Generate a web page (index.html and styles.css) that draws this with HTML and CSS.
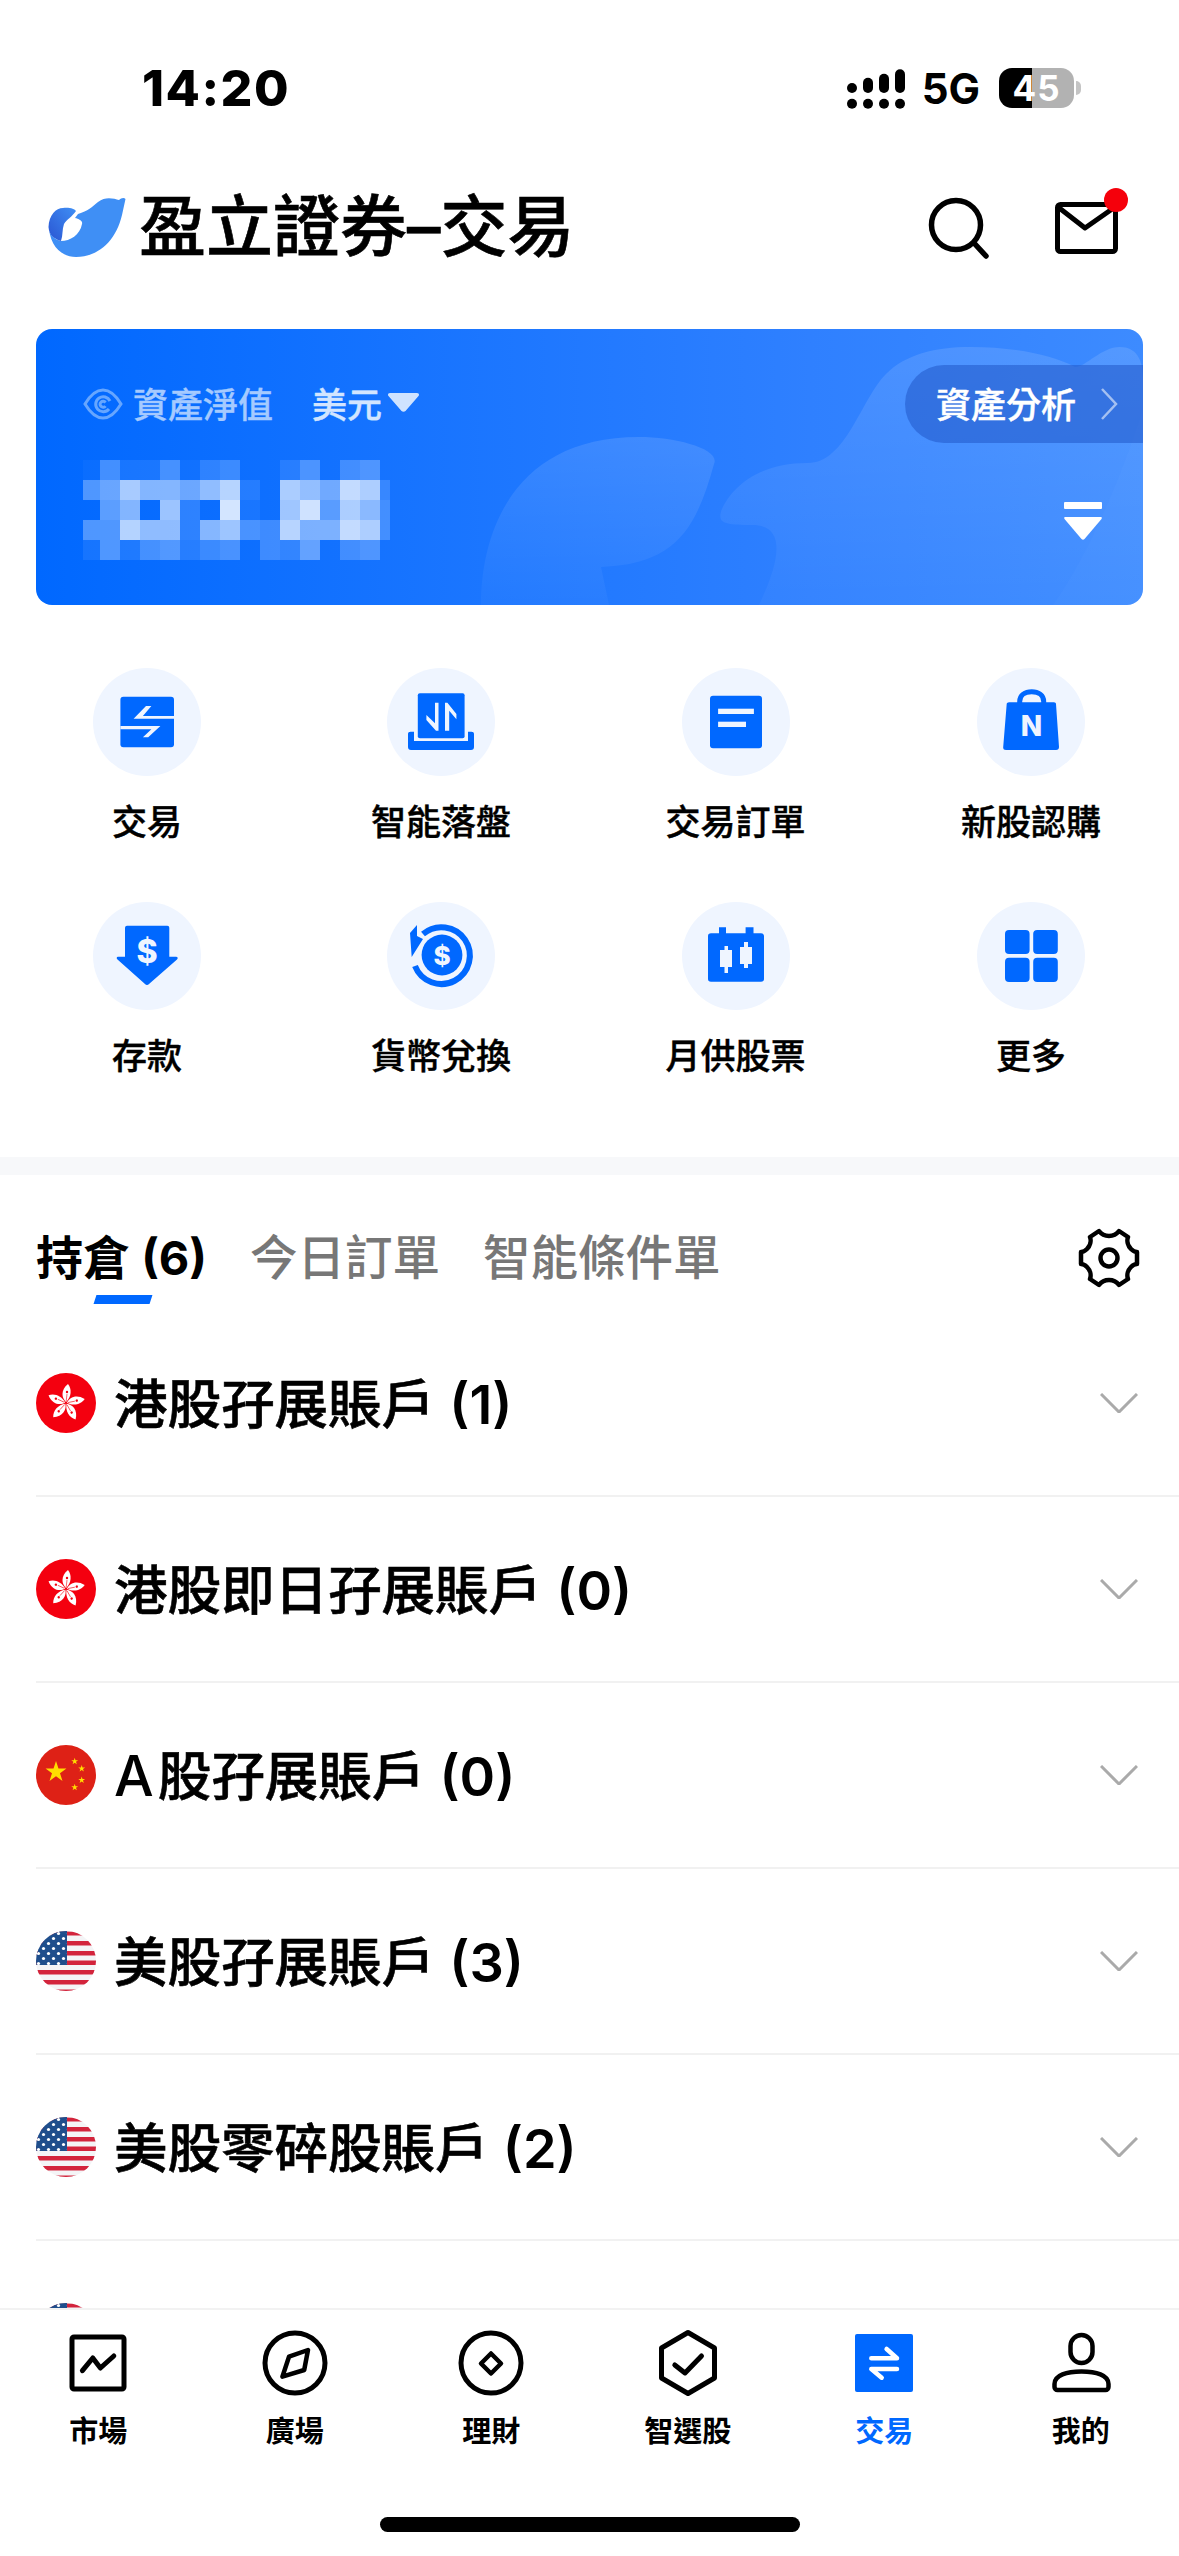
FILE: index.html
```html
<!DOCTYPE html>
<html lang="zh-Hant">
<head>
<meta charset="utf-8">
<meta name="viewport" content="width=device-width, initial-scale=1">
<title>盈立證券-交易</title>
<link rel="stylesheet" href="styles.css">
</head>

<body>

<!-- Shared flags -->
<svg class="svg-defs" aria-hidden="true">
    <defs>
        <polygon id="star" points="0,-1 .225,-.309 .951,-.309 .363,.118 .588,.809 0,.382 -.588,.809 -.363,.118 -.951,-.309 -.225,-.309"/>
        <g id="petal">
            <path d="M30 29C25.500 25 24.500 17 32 11C36 16 35.500 24 30 29Z" fill="#fff"/>
            <circle cx="31" cy="19" r="1.200" fill="#f4000f"/>
            <path d="M30.200 28L31 21" stroke="#f4000f" stroke-width=".6"/>
        </g>
        <symbol id="flag-hk" viewBox="0 0 60 60">
            <circle cx="30" cy="30" r="30" fill="#f4000f"/>
            <use href="#petal"/>
            <use href="#petal" transform="rotate(72 30 30)"/>
            <use href="#petal" transform="rotate(144 30 30)"/>
            <use href="#petal" transform="rotate(216 30 30)"/>
            <use href="#petal" transform="rotate(288 30 30)"/>
        </symbol>
        <symbol id="flag-cn" viewBox="0 0 60 60">
            <circle cx="30" cy="30" r="30" fill="#de2116"/>
            <g fill="#ffde00">
                <use href="#star" transform="translate(20 27) scale(11)"/>
                <use href="#star" transform="translate(38.7 16.3) scale(3.6)"/>
                <use href="#star" transform="translate(45.7 23.7) scale(3.6)"/>
                <use href="#star" transform="translate(45.7 35) scale(3.6)"/>
                <use href="#star" transform="translate(38.7 42.3) scale(3.6)"/>
            </g>
        </symbol>
        <pattern id="us-stars" width="10" height="10" patternUnits="userSpaceOnUse">
            <circle cx="2.5" cy="2.5" r="1.6" fill="#fff"/>
            <circle cx="7.5" cy="7.5" r="1.6" fill="#fff"/>
        </pattern>
        <clipPath id="us-clip"><circle cx="30" cy="30" r="30"/></clipPath>
        <symbol id="flag-us" viewBox="0 0 60 60">
            <g clip-path="url(#us-clip)">
                <rect width="60" height="60" fill="#f4f4f6"/>
                <path d="M0 .5h60v4H0zM0 10h60v4.500H0zM0 20h60v4.500H0zM0 29.500h60v4.500H0zM0 39h60v4.500H0zM0 49h60v4.500H0zM0 58.500h60v2H0z" fill="#d3243c"/>
                <rect width="31" height="34" fill="#1f4e8c"/>
                <rect width="31" height="34" fill="url(#us-stars)"/>
            </g>
        </symbol>
        <linearGradient id="art-fade" x1="0" y1="0" x2="0" y2="1">
            <stop offset="0" stop-color="#fff" stop-opacity=".12"/>
            <stop offset="1" stop-color="#fff" stop-opacity=".03"/>
        </linearGradient>
    </defs>
</svg>

<main class="page">

    <!-- Status bar -->
    <div class="status-bar">
        <span class="status-time">14:20</span>
        <div class="status-right">
            <svg class="signal" viewBox="0 0 59 43" fill="#000">
                <rect x="0" y="16" width="10" height="10" rx="5"/>
                <rect x="16" y="10.700" width="10" height="15.300" rx="5"/>
                <rect x="32" y="6.700" width="10" height="19.300" rx="5"/>
                <rect x="48" y="2.300" width="10" height="23.700" rx="5"/>
                <circle cx="5" cy="36.700" r="5"/>
                <circle cx="21" cy="36.700" r="5"/>
                <circle cx="37" cy="36.700" r="5"/>
                <circle cx="53" cy="36.700" r="5"/>
            </svg>
            <span class="status-net">5G</span>
            <span class="battery">45</span>
        </div>
    </div>

    <!-- Title -->
    <header class="top-bar">
        <svg class="logo" viewBox="0 0 78 60">
            <defs>
                <linearGradient id="logo-dark" x1="0" y1="1" x2="1" y2="0">
                    <stop offset="0" stop-color="#2a55d2"/>
                    <stop offset="1" stop-color="#3f8ff5"/>
                </linearGradient>
            </defs>
            <path d="M1 32C3 50 14 60 28 60C50 60 68 44 74 18L77.500 2C76 0 73 1 71 3C66 2 58-1 50 5C44 10 40 14 30 17L27 21C31 22 35 24 34 27C32 38 22 44 13 44C6 42 2 38 1 32Z" fill="#3f8ff5"/>
            <path d="M.500 30C1 18 8 11 15 11C21 10 27 12 28 14C24 20 19 22 16 27C14 33 15 38 13 44C6 42 1 38 .500 30Z" fill="url(#logo-dark)"/>
        </svg>
        <h1 class="app-title">盈立證券–交易</h1>
        <svg class="search-icon" viewBox="0 0 70 66" fill="none" stroke="#000" stroke-width="5.500" stroke-linecap="round">
            <circle cx="32" cy="31" r="24.500"/>
            <path d="M50 49L62 62"/>
        </svg>
        <svg class="mail-icon" viewBox="0 0 78 82" fill="none" stroke="#000" stroke-width="5" stroke-linejoin="round">
            <rect x="5.500" y="18.500" width="58" height="47" rx="3"/>
            <path d="M6 21L33 42L63 21"/>
            <circle cx="64" cy="14" r="12" fill="#f5000b" stroke="none"/>
        </svg>
    </header>

    <!-- Asset card -->
    <section class="asset-card">
        <svg class="card-art" viewBox="0 0 1107 276" preserveAspectRatio="none">
            <path d="M445 276C445 200 480 108 603 108C640 108 685 120 678 135C660 200 640 235 565 238L573 276Z" fill="url(#art-fade)"/>
            <path d="M723 276C745 230 750 196 716 196C690 196 680 195 686 180C695 160 720 134 772 134C810 134 825 70 850 45C870 25 900 18 934 18C975 18 1015 25 1039 38C1050 38 1065 18 1084 18C1100 18 1107 30 1107 50V276Z" fill="url(#art-fade)"/>
            <path d="M1107 80L1107 276H1017C1050 230 1085 150 1107 80Z" fill="#fff" fill-opacity=".02"/>
        </svg>
        <div class="asset-head">
            <svg class="eye-icon" viewBox="0 0 40 32" fill="none" stroke="#66a6ff" stroke-width="3">
                <path d="M2 16C8 6 14 2 20 2C26 2 32 6 38 16C32 26 26 30 20 30C14 30 8 26 2 16Z"/>
                <path d="M27 13A7.500 7.500 0 1 0 26 21M22.500 14.500A3 3 0 1 0 22.500 18"/>
            </svg>
            <span class="asset-label">資產淨值</span>
            <span class="asset-currency">美元</span>
            <svg class="currency-caret" viewBox="0 0 31 19"><path d="M2 0H29C31 0 31.500 2 30.500 3L17.500 18C16.500 19 14.500 19 13.500 18L.500 3C-.500 2 0 0 2 0Z" fill="#cfe3ff"/></svg>
            <div class="analysis-pill">
                <span class="pill-text">資產分析</span>
                <svg class="pill-arrow" viewBox="0 0 18 32" fill="none" stroke="#fff" stroke-opacity=".55" stroke-width="2.500"><path d="M2 1L16 16L2 31"/></svg>
            </div>
        </div>
        <div class="asset-body">
            <!-- Masked balance -->
            <svg class="masked-value" viewBox="0 0 307 100" fill="#fff">
                <rect width="17" height="20" fill-opacity=".03"/><rect x="17" width="20" height="20" fill-opacity=".25"/><rect x="37" width="20" height="20" fill-opacity=".08"/><rect x="57" width="20" height="20" fill-opacity=".08"/><rect x="77" width="20" height="20" fill-opacity=".25"/><rect x="97" width="20" height="20" fill-opacity=".03"/><rect x="117" width="20" height="20" fill-opacity=".15"/><rect x="137" width="20" height="20" fill-opacity=".2"/><rect x="197" width="20" height="20" fill-opacity=".1"/><rect x="217" width="20" height="20" fill-opacity=".25"/><rect x="257" width="20" height="20" fill-opacity=".2"/><rect x="277" width="20" height="20" fill-opacity=".25"/>
                <rect y="20" width="17" height="20" fill-opacity=".3"/><rect x="17" y="20" width="20" height="20" fill-opacity=".4"/><rect x="37" y="20" width="20" height="20" fill-opacity=".65"/><rect x="57" y="20" width="20" height="20" fill-opacity=".5"/><rect x="77" y="20" width="20" height="20" fill-opacity=".5"/><rect x="97" y="20" width="20" height="20" fill-opacity=".4"/><rect x="117" y="20" width="20" height="20" fill-opacity=".55"/><rect x="137" y="20" width="20" height="20" fill-opacity=".7"/><rect x="157" y="20" width="20" height="20" fill-opacity=".1"/><rect x="197" y="20" width="20" height="20" fill-opacity=".65"/><rect x="217" y="20" width="20" height="20" fill-opacity=".55"/><rect x="237" y="20" width="20" height="20" fill-opacity=".4"/><rect x="257" y="20" width="20" height="20" fill-opacity=".75"/><rect x="277" y="20" width="20" height="20" fill-opacity=".65"/><rect x="297" y="20" width="10" height="20" fill-opacity=".15"/>
                <rect x="17" y="40" width="20" height="20" fill-opacity=".35"/><rect x="37" y="40" width="20" height="20" fill-opacity=".5"/><rect x="77" y="40" width="20" height="20" fill-opacity=".6"/><rect x="97" y="40" width="20" height="20" fill-opacity=".15"/><rect x="137" y="40" width="20" height="20" fill-opacity=".82"/><rect x="157" y="40" width="20" height="20" fill-opacity=".05"/><rect x="197" y="40" width="20" height="20" fill-opacity=".6"/><rect x="217" y="40" width="20" height="20" fill-opacity=".8"/><rect x="237" y="40" width="20" height="20" fill-opacity=".3"/><rect x="257" y="40" width="20" height="20" fill-opacity=".65"/><rect x="277" y="40" width="20" height="20" fill-opacity=".5"/><rect x="297" y="40" width="10" height="20" fill-opacity=".2"/>
                <rect y="60" width="17" height="20" fill-opacity=".3"/><rect x="17" y="60" width="20" height="20" fill-opacity=".3"/><rect x="37" y="60" width="20" height="20" fill-opacity=".7"/><rect x="57" y="60" width="20" height="20" fill-opacity=".55"/><rect x="77" y="60" width="20" height="20" fill-opacity=".55"/><rect x="97" y="60" width="20" height="20" fill-opacity=".15"/><rect x="117" y="60" width="20" height="20" fill-opacity=".5"/><rect x="137" y="60" width="20" height="20" fill-opacity=".6"/><rect x="157" y="60" width="20" height="20" fill-opacity=".25"/><rect x="177" y="60" width="20" height="20" fill-opacity=".2"/><rect x="197" y="60" width="20" height="20" fill-opacity=".7"/><rect x="217" y="60" width="20" height="20" fill-opacity=".45"/><rect x="237" y="60" width="20" height="20" fill-opacity=".45"/><rect x="257" y="60" width="20" height="20" fill-opacity=".75"/><rect x="277" y="60" width="20" height="20" fill-opacity=".65"/><rect x="297" y="60" width="10" height="20" fill-opacity=".2"/>
                <rect y="80" width="17" height="20" fill-opacity=".08"/><rect x="17" y="80" width="20" height="20" fill-opacity=".3"/><rect x="37" y="80" width="20" height="20" fill-opacity=".1"/><rect x="57" y="80" width="20" height="20" fill-opacity=".25"/><rect x="77" y="80" width="20" height="20" fill-opacity=".3"/><rect x="97" y="80" width="20" height="20" fill-opacity=".12"/><rect x="117" y="80" width="20" height="20" fill-opacity=".2"/><rect x="137" y="80" width="20" height="20" fill-opacity=".25"/><rect x="177" y="80" width="20" height="20" fill-opacity=".2"/><rect x="197" y="80" width="20" height="20" fill-opacity=".15"/><rect x="217" y="80" width="20" height="20" fill-opacity=".35"/><rect x="257" y="80" width="20" height="20" fill-opacity=".2"/><rect x="277" y="80" width="20" height="20" fill-opacity=".25"/>
            </svg>
            <svg class="expand-icon" viewBox="0 0 38 38" fill="#fff">
                <rect x="0" y="0" width="38" height="7" rx="1"/>
                <path d="M1 15H37C38 15 38 16 37.500 17L20.500 37C19.500 38 18.500 38 17.500 37L.500 17C0 16 0 15 1 15Z"/>
            </svg>
        </div>
    </section>

    <!-- Quick actions -->
    <nav class="quick-grid">
        <a class="quick-item">
            <span class="quick-circle">
                <svg viewBox="0 0 108 108">
                    <rect x="27.400" y="28.700" width="53.600" height="50.600" rx="3" fill="#0068ff"/>
                    <path d="M40.600 50.700L53 38H58.400L49.900 48H81V50.700ZM27.400 58H67.400L55.200 69.300H49.900L58.400 61.300H27.400Z" fill="#eff5ff"/>
                </svg>
            </span>
            <span class="quick-label">交易</span>
        </a>
        <a class="quick-item">
            <span class="quick-circle">
                <svg viewBox="0 0 108 108">
                    <path d="M21 66C21 64.500 22 63.700 23.500 63.700H27V73H81V63.700H84.500C86 63.700 87 64.500 87 66V79C87 81 86 82 84 82H24C22 82 21 81 21 79Z" fill="#0068ff"/>
                    <rect x="30.800" y="25.300" width="46.800" height="45" rx="2" fill="#0068ff"/>
                    <path d="M51.500 34.700V62.700H49L39.400 52V47L48 55.300V34.700ZM58 62.700V34.700H60.400L69.400 46V51.300L62.200 42.700V62.700Z" fill="#eff5ff"/>
                </svg>
            </span>
            <span class="quick-label">智能落盤</span>
        </a>
        <a class="quick-item">
            <span class="quick-circle">
                <svg viewBox="0 0 108 108">
                    <rect x="28" y="27.700" width="52" height="52.600" rx="3" fill="#0068ff"/>
                    <rect x="36.100" y="40.700" width="35.800" height="5.300" fill="#eff5ff"/>
                    <rect x="36.100" y="53.700" width="27.900" height="5.300" fill="#eff5ff"/>
                </svg>
            </span>
            <span class="quick-label">交易訂單</span>
        </a>
        <a class="quick-item">
            <span class="quick-circle">
                <svg viewBox="0 0 108 108">
                    <path d="M42.700 36V33.500C42.700 27 48 23.800 54.700 23.800C61.400 23.800 66.700 27 66.700 33.500V36" fill="none" stroke="#0068ff" stroke-width="5"/>
                    <path d="M32 34.300H77C78 34.300 79 35 79 36L82 79C82 81 81 82 79 82H29C27 82 26 81 26.200 79L29.700 36C29.700 35 31 34.300 32 34.300Z" fill="#0068ff"/>
                    <text class="icon-letter" x="54.500" y="68" text-anchor="middle" font-size="28">N</text>
                </svg>
            </span>
            <span class="quick-label">新股認購</span>
        </a>
        <a class="quick-item">
            <span class="quick-circle">
                <svg viewBox="0 0 108 108">
                    <path d="M34 23.700H74.300C75.500 23.700 76.300 24.500 76.300 26V54.700H83C85 54.700 85 56.500 84 57.500L56 82C55 83.300 53 83.300 52 82L24.500 57.500C23.300 56.500 23.500 54.700 25 54.700H32V26C32 24.500 33 23.700 34 23.700Z" fill="#0068ff"/>
                    <text class="icon-letter" x="54" y="61" text-anchor="middle" font-size="32">$</text>
                </svg>
            </span>
            <span class="quick-label">存款</span>
        </a>
        <a class="quick-item">
            <span class="quick-circle">
                <svg viewBox="0 0 108 108">
                    <path d="M28 64A28.400 28.400 0 1 0 36 32" fill="none" stroke="#0068ff" stroke-width="6"/>
                    <path d="M30 23L23 31L24.700 55L36 37L30 34Z" fill="#0068ff"/>
                    <circle cx="55" cy="53" r="20.400" fill="#0068ff"/>
                    <text class="icon-letter" x="55" y="62.500" text-anchor="middle" font-size="26">$</text>
                </svg>
            </span>
            <span class="quick-label">貨幣兌換</span>
        </a>
        <a class="quick-item">
            <span class="quick-circle">
                <svg viewBox="0 0 108 108">
                    <path d="M37 25.300H44V31.300H63.600V25.300H71.500V31.300H79C81 31.300 82 32.300 82 34V77C82 79 81 79.700 79 79.700H29C27 79.700 26 79 26 77V34C26 32.300 27 31.300 29 31.300H37Z" fill="#0068ff"/>
                    <path d="M42.500 44H46V48H50V65H46V71H42.500V65H38V48H42.500ZM62 40H66V45H70V62H66V66H62V62H58V45H62Z" fill="#eff5ff"/>
                </svg>
            </span>
            <span class="quick-label">月供股票</span>
        </a>
        <a class="quick-item">
            <span class="quick-circle">
                <svg viewBox="0 0 108 108" fill="#0068ff">
                    <rect x="28" y="28" width="24.600" height="24" rx="4"/>
                    <rect x="56.200" y="28" width="24.600" height="24" rx="4"/>
                    <rect x="28" y="55.700" width="24.600" height="24.300" rx="4"/>
                    <rect x="56.200" y="55.700" width="24.600" height="24.300" rx="4"/>
                </svg>
            </span>
            <span class="quick-label">更多</span>
        </a>
    </nav>

    <div class="band"></div>

    <!-- Position tabs -->
    <div class="tabs">
        <span class="tab tab-active">持倉 (6)</span>
        <span class="tab">今日訂單</span>
        <span class="tab">智能條件單</span>
        <svg class="gear-icon" viewBox="0 0 62 60" fill="none" stroke="#000" stroke-width="4.500" stroke-linejoin="round">
            <path d="M21 3C24 7 27 8 31 8C35 8 38 7 41 3L50 9C48.500 13 50 18 53 21C55 23 57 24 59 24V36C57 36 55 37 53 39C50 42 48.500 47 50 51L41 57C38 53 35 52 31 52C27 52 24 53 21 57L12 51C13.500 47 12 42 9 39C7 37 5 36 3 36V24C5 24 7 23 9 21C12 18 13.500 13 12 9Z"/>
            <circle cx="31" cy="30" r="8.500"/>
        </svg>
    </div>

    <!-- Accounts -->
    <ul class="account-list">
        <li class="account-row">
            <svg class="flag"><use href="#flag-hk"/></svg>
            <span class="account-name">港股孖展賬戶 <span class="count">(1)</span></span>
            <svg class="chevron" viewBox="0 0 38 20" fill="none" stroke="#aaa" stroke-width="3"><path d="M1 1L19 19L37 1"/></svg>
        </li>
        <li class="account-row">
            <svg class="flag"><use href="#flag-hk"/></svg>
            <span class="account-name">港股即日孖展賬戶 <span class="count">(0)</span></span>
            <svg class="chevron" viewBox="0 0 38 20" fill="none" stroke="#aaa" stroke-width="3"><path d="M1 1L19 19L37 1"/></svg>
        </li>
        <li class="account-row">
            <svg class="flag"><use href="#flag-cn"/></svg>
            <span class="account-name"><span class="latin">A</span>股孖展賬戶 <span class="count">(0)</span></span>
            <svg class="chevron" viewBox="0 0 38 20" fill="none" stroke="#aaa" stroke-width="3"><path d="M1 1L19 19L37 1"/></svg>
        </li>
        <li class="account-row">
            <svg class="flag"><use href="#flag-us"/></svg>
            <span class="account-name">美股孖展賬戶 <span class="count">(3)</span></span>
            <svg class="chevron" viewBox="0 0 38 20" fill="none" stroke="#aaa" stroke-width="3"><path d="M1 1L19 19L37 1"/></svg>
        </li>
        <li class="account-row">
            <svg class="flag"><use href="#flag-us"/></svg>
            <span class="account-name">美股零碎股賬戶 <span class="count">(2)</span></span>
            <svg class="chevron" viewBox="0 0 38 20" fill="none" stroke="#aaa" stroke-width="3"><path d="M1 1L19 19L37 1"/></svg>
        </li>
        <li class="account-row">
            <svg class="flag"><use href="#flag-us"/></svg>
        </li>
    </ul>

</main>

<!-- Bottom navigation -->
<footer class="tab-bar">
    <div class="tab-items">
        <a class="tab-item">
            <svg viewBox="0 0 68 68" fill="none" stroke="#000" stroke-width="5" stroke-linecap="round" stroke-linejoin="round">
                <rect x="8" y="8" width="52" height="52" rx="2"/>
                <path d="M18.400 41.700L28.800 29L36.400 39L49.800 27"/>
            </svg>
            <span>市場</span>
        </a>
        <a class="tab-item">
            <svg viewBox="0 0 68 68" fill="none" stroke="#000" stroke-width="5" stroke-linejoin="round">
                <circle cx="34" cy="34" r="30"/>
                <path d="M47 21L43.200 41L21.400 47.700L28 27.700Z" stroke-width="4.500"/>
            </svg>
            <span>廣場</span>
        </a>
        <a class="tab-item">
            <svg viewBox="0 0 68 68" fill="none" stroke="#000" stroke-width="5" stroke-linejoin="round">
                <circle cx="34" cy="34" r="30"/>
                <path d="M34 24.500L44 34.500L34 44.500L24 34.500Z" stroke-width="4.500"/>
            </svg>
            <span>理財</span>
        </a>
        <a class="tab-item">
            <svg viewBox="0 0 68 68" fill="none" stroke="#000" stroke-width="5" stroke-linecap="round" stroke-linejoin="round">
                <path d="M34 3.500L60.500 19V49L34 64.500L7.500 49V19Z"/>
                <path d="M20.800 36L31 44L47.500 27"/>
            </svg>
            <span>智選股</span>
        </a>
        <a class="tab-item tab-item-active">
            <svg viewBox="0 0 68 68" fill="none" stroke="#fff" stroke-width="4.500" stroke-linecap="round" stroke-linejoin="round">
                <rect x="5" y="5" width="58" height="58" rx="2" fill="#0068ff" stroke="none"/>
                <path d="M21.300 29.200H47L36.600 20M47 40H21.300L31.700 48.700"/>
            </svg>
            <span>交易</span>
        </a>
        <a class="tab-item">
            <svg viewBox="0 0 68 68" fill="none" stroke="#000" stroke-width="4.500" stroke-linejoin="round">
                <rect x="23.500" y="6" width="22" height="28" rx="11"/>
                <path d="M7.500 55C7.500 46 20 42.500 34.500 42.500C49 42.500 61.500 46 61.500 55V58A3 3 0 0 1 58.500 61H10.500A3 3 0 0 1 7.500 58Z"/>
            </svg>
            <span>我的</span>
        </a>
    </div>
    <div class="home-indicator"></div>
</footer>

</body>
</html>
```

FILE: styles.css
```css
* {
    box-sizing: border-box;
}

html, body {
    margin: 0;
    width: 1179px;
    height: 2556px;
    overflow: hidden;
    background: #fff;
}

body {
    position: relative;
    font-family: Inter, "Noto Sans CJK TC", sans-serif;
    color: #000;
}

.svg-defs {
    position: absolute;
    width: 0;
    height: 0;
}

.page {
    height: 2556px;
    overflow: hidden;
}

/* Status bar */
.status-bar {
    display: flex;
    align-items: center;
    height: 176px;
    padding: 0 105px 0 142px;
}

.status-time {
    font-size: 50px;
    font-weight: 800;
    letter-spacing: 1.5px;
}

.status-right {
    display: flex;
    align-items: center;
    margin-left: auto;
}

.signal {
    width: 59px;
    height: 43px;
    margin-right: 16px;
}

.status-net {
    margin-right: 19px;
    font-size: 42px;
    font-weight: 700;
}

.battery {
    position: relative;
    width: 75px;
    height: 40px;
    border-radius: 13px;
    background: linear-gradient(90deg, #000 44%, #b2b2b2 44%);
    color: #fff;
    font-size: 35px;
    font-weight: 700;
    letter-spacing: 1px;
    line-height: 40px;
    text-align: center;
}

.battery::after {
    content: "";
    position: absolute;
    top: 13px;
    right: -7px;
    width: 5px;
    height: 14px;
    border-radius: 0 7px 7px 0;
    background: #c4c4c4;
}

/* Title */
.top-bar {
    display: flex;
    align-items: center;
    height: 102px;
    padding: 0 49px 0 48px;
}

.logo {
    width: 78px;
    height: 60px;
}

.app-title {
    margin: 0 0 0 13px;
    font-size: 67px;
    font-weight: 500;
    line-height: 80px;
    white-space: nowrap;
    -webkit-text-stroke: 0.6px #000;
}

.search-icon {
    width: 70px;
    height: 66px;
    margin-left: auto;
}

.mail-icon {
    width: 78px;
    height: 82px;
    margin-left: 58px;
}

/* Asset card */
.asset-card {
    position: relative;
    height: 276px;
    margin: 51px 36px 0;
    padding: 36px 0 0 47px;
    border-radius: 16px;
    overflow: hidden;
    background: linear-gradient(90deg, #0068ff 0%, #2f80ff 70%, #3d8bff 100%);
}

.card-art {
    position: absolute;
    top: 0;
    left: 0;
    width: 100%;
    height: 100%;
}

.asset-head {
    position: relative;
    display: flex;
    align-items: center;
    height: 78px;
}

.eye-icon {
    width: 40px;
    height: 32px;
}

.asset-label {
    margin: 0 0 4px 10px;
    font-size: 35px;
    font-weight: 500;
    color: #a5caff;
    -webkit-text-stroke: 0.3px #a5caff;
}

.asset-currency {
    margin: 0 0 4px 39px;
    font-size: 35px;
    font-weight: 500;
    color: #d2e5ff;
    -webkit-text-stroke: 0.4px #d2e5ff;
}

.currency-caret {
    width: 31px;
    height: 19px;
    margin: 0 0 4px 6px;
}

.analysis-pill {
    display: flex;
    align-items: center;
    height: 78px;
    margin-left: auto;
    padding: 0 25px 0 31px;
    border-radius: 39px 0 0 39px;
    background: rgba(32, 88, 200, 0.55);
    color: #fff;
    font-size: 35px;
    font-weight: 500;
}

.pill-text {
    margin-bottom: 4px;
    -webkit-text-stroke: 0.4px #fff;
}

.pill-arrow {
    width: 18px;
    height: 32px;
    margin-left: 24px;
}

.asset-body {
    position: relative;
    display: flex;
    align-items: flex-start;
    justify-content: space-between;
    margin-top: 17px;
    padding-right: 41px;
}

.masked-value {
    width: 307px;
    height: 100px;
}

.expand-icon {
    width: 38px;
    height: 38px;
    margin-top: 42px;
}

/* Quick actions */
.quick-grid {
    display: grid;
    grid-template-columns: 294px 294px 295px 296px;
    row-gap: 58px;
    margin-top: 63px;
}

.quick-item {
    display: flex;
    flex-direction: column;
    align-items: center;
}

.quick-circle {
    width: 108px;
    height: 108px;
    border-radius: 50%;
    background: #eff5ff;
}

.quick-circle svg {
    display: block;
    width: 108px;
    height: 108px;
}

.icon-letter {
    fill: #eff5ff;
    font-weight: 800;
}

.quick-label {
    margin-top: 24px;
    font-size: 35px;
    font-weight: 500;
    line-height: 44px;
    -webkit-text-stroke: 0.4px #000;
}

.band {
    height: 18px;
    margin-top: 79px;
    background: #f7f8fa;
}

/* Position tabs */
.tabs {
    display: flex;
    align-items: center;
    gap: 43px;
    height: 136px;
    padding: 55px 39px 25px 36px;
}

.tab {
    position: relative;
    font-size: 47.500px;
    font-weight: 500;
    line-height: 56px;
    color: #777;
}

.tab-active {
    font-size: 47px;
    font-weight: 700;
    color: #000;
}

.tab-active::after {
    content: "";
    position: absolute;
    left: 50%;
    bottom: -18px;
    width: 56px;
    height: 9px;
    margin-left: -27px;
    background: #0068ff;
    transform: skewX(-18deg);
}

.gear-icon {
    width: 62px;
    height: 60px;
    margin-left: auto;
}

/* Accounts */
.account-list {
    margin: 0;
    padding: 0;
    list-style: none;
}

.account-row {
    display: flex;
    align-items: center;
    height: 186px;
    margin-left: 36px;
    padding-right: 41px;
    border-bottom: 2px solid #f1f1f1;
}

.flag {
    flex: none;
    width: 60px;
    height: 60px;
}

.account-name {
    margin: 0 0 5px 18px;
    font-size: 53.500px;
    font-weight: 500;
    white-space: nowrap;
    -webkit-text-stroke: 0.6px #000;
}

.count {
    font-size: 54px;
    font-weight: 600;
    -webkit-text-stroke: 0;
}

.latin {
    margin-right: 4px;
    font-size: 56px;
    -webkit-text-stroke: 0;
}

.chevron {
    width: 38px;
    height: 20px;
    margin-left: auto;
}

/* Bottom navigation */
.tab-bar {
    position: absolute;
    left: 0;
    right: 0;
    bottom: 0;
    height: 248px;
    padding-top: 19px;
    border-top: 2px solid #f2f2f2;
    background: #fff;
}

.tab-items {
    display: grid;
    grid-template-columns: repeat(6, 1fr);
}

.tab-item {
    display: flex;
    flex-direction: column;
    align-items: center;
    font-size: 29px;
    font-weight: 700;
    line-height: 36px;
}

.tab-item svg {
    width: 68px;
    height: 68px;
    margin-bottom: 17px;
}

.tab-item-active {
    color: #0068ff;
}

.home-indicator {
    width: 420px;
    height: 15px;
    margin: 67px auto 0;
    border-radius: 8px;
    background: #000;
}
```
